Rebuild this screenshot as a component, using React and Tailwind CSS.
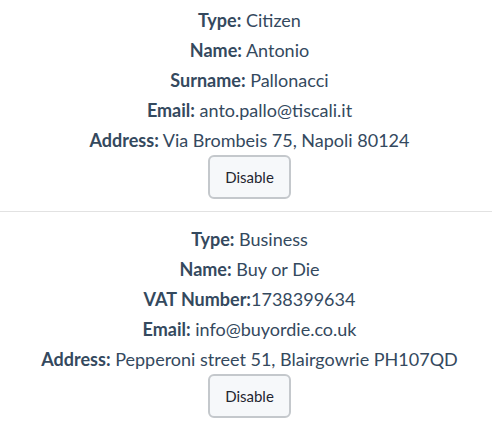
const users = [
  {
    id: 1,
    fields: [
      ['Type:', 'Citizen'],
      ['Name:', 'Antonio'],
      ['Surname:', 'Pallonacci'],
      ['Email:', 'anto.pallo@tiscali.it'],
      ['Address:', 'Via Brombeis 75, Napoli 80124'],
    ],
  },
  {
    id: 2,
    fields: [
      ['Type:', 'Business'],
      ['Name:', 'Buy or Die'],
      ['VAT Number:', '1738399634', true],
      ['Email:', 'info@buyordie.co.uk'],
      ['Address:', 'Pepperoni street 51, Blairgowrie PH107QD'],
    ],
  },
];

const UserCard = ({ user, first }) => (
  <div className={`flex flex-col items-center pl-[7px] pb-3 border-b border-[#e2e2e2] ${first ? 'pt-[5px]' : 'pt-3'}`}>
    {user.fields.map(([label, value, tight]) => (
      <p key={label} className="h-[30px] leading-[30px] text-[18px] text-[#34495e]">
        <strong className="font-bold">{label}</strong>
        {tight ? '' : ' '}
        {value}
      </p>
    ))}
    <button className="w-[83px] h-[44px] rounded-md border-2 border-[#c4c8cc] bg-[#f6f8fa] text-[15px] text-[#1f2530]">
      Disable
    </button>
  </div>
);

export default function App() {
  return (
    <div className="w-[492px] bg-white" style={{ fontFamily: 'Lato, "Open Sans", sans-serif' }}>
      {users.map((user, i) => (
        <UserCard key={user.id} user={user} first={i === 0} />
      ))}
    </div>
  );
}
